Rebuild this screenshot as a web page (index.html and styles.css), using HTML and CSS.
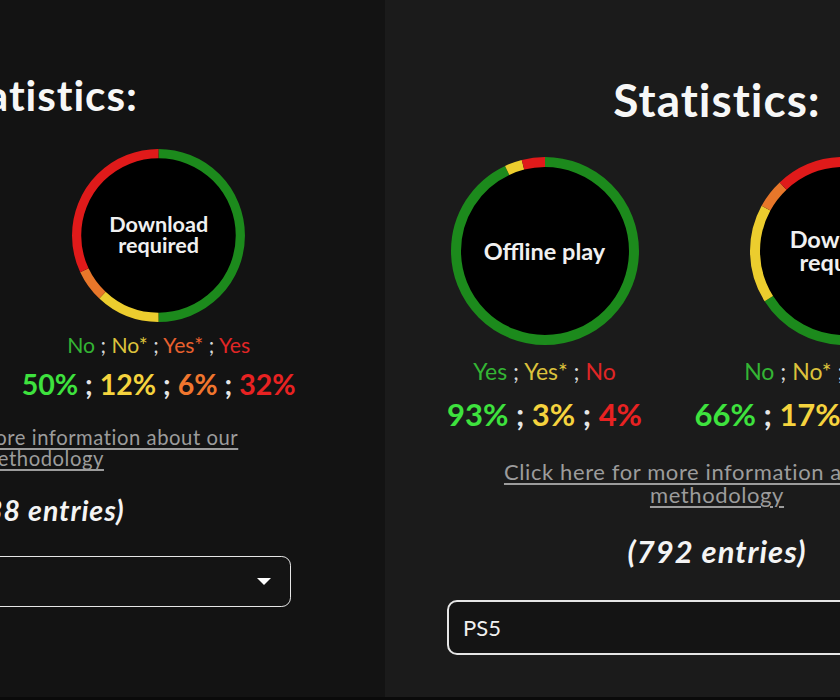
FILE: index.html
```html
<!DOCTYPE html>
<html lang="en">
<head>
    <meta charset="utf-8">
    <meta name="viewport" content="width=device-width, initial-scale=1.0">
    <title>Statistics</title>
    <link rel="stylesheet" href="styles.css">
</head>
<body>
    <div class="shots">
        <!-- Switch page -->
        <div class="shot shot-left">
            <div class="page">
                <h2 class="title">Statistics:</h2>
                <div class="charts">
                    <div class="chart">
                        <div class="donut">
                            <svg class="ring" viewBox="0 0 188 188">
                                <circle class="ring-hole" cx="94" cy="94" r="89"/>
                                <g transform="rotate(-90 94 94)">
                                    <circle class="seg seg-green" cx="94" cy="94" r="89" pathLength="100" stroke-dasharray="88 100" stroke-dashoffset="0"/>
                                    <circle class="seg seg-yellow" cx="94" cy="94" r="89" pathLength="100" stroke-dasharray="5 100" stroke-dashoffset="-88"/>
                                    <circle class="seg seg-red" cx="94" cy="94" r="89" pathLength="100" stroke-dasharray="7 100" stroke-dashoffset="-93"/>
                                </g>
                            </svg>
                            <span class="donut-label">Offline play</span>
                        </div>
                        <div class="legend"><span class="c-green">Yes</span> ; <span class="c-yellow">Yes*</span> ; <span class="c-red">No</span></div>
                        <div class="shares"><span class="p-green">88%</span> ; <span class="p-yellow">5%</span> ; <span class="p-red">7%</span></div>
                    </div>
                    <div class="chart">
                        <div class="donut">
                            <svg class="ring" viewBox="0 0 188 188">
                                <circle class="ring-hole" cx="94" cy="94" r="89"/>
                                <g transform="rotate(-90 94 94)">
                                    <circle class="seg seg-green" cx="94" cy="94" r="89" pathLength="100" stroke-dasharray="50 100" stroke-dashoffset="0"/>
                                    <circle class="seg seg-yellow" cx="94" cy="94" r="89" pathLength="100" stroke-dasharray="12 100" stroke-dashoffset="-50"/>
                                    <circle class="seg seg-orange" cx="94" cy="94" r="89" pathLength="100" stroke-dasharray="6 100" stroke-dashoffset="-62"/>
                                    <circle class="seg seg-red" cx="94" cy="94" r="89" pathLength="100" stroke-dasharray="32 100" stroke-dashoffset="-68"/>
                                </g>
                            </svg>
                            <span class="donut-label">Download<br>required</span>
                        </div>
                        <div class="legend"><span class="c-green">No</span> ; <span class="c-yellow">No*</span> ; <span class="c-orange">Yes*</span> ; <span class="c-red">Yes</span></div>
                        <div class="shares"><span class="p-green">50%</span> ; <span class="p-yellow">12%</span> ; <span class="p-orange">6%</span> ; <span class="p-red">32%</span></div>
                    </div>
                </div>
                <a class="method-link" href="#">Click here for more information about our methodology</a>
                <div class="entries">(538 entries)</div>
                <div class="select">
                    <span>Switch</span>
                    <span class="caret"></span>
                </div>
            </div>
        </div>

        <!-- PS5 page -->
        <div class="shot shot-right">
            <div class="page">
                <h2 class="title">Statistics:</h2>
                <div class="charts">
                    <div class="chart">
                        <div class="donut">
                            <svg class="ring" viewBox="0 0 188 188">
                                <circle class="ring-hole" cx="94" cy="94" r="89"/>
                                <g transform="rotate(-90 94 94)">
                                    <circle class="seg seg-green" cx="94" cy="94" r="89" pathLength="100" stroke-dasharray="93 100" stroke-dashoffset="0"/>
                                    <circle class="seg seg-yellow" cx="94" cy="94" r="89" pathLength="100" stroke-dasharray="3 100" stroke-dashoffset="-93"/>
                                    <circle class="seg seg-red" cx="94" cy="94" r="89" pathLength="100" stroke-dasharray="4 100" stroke-dashoffset="-96"/>
                                </g>
                            </svg>
                            <span class="donut-label">Offline play</span>
                        </div>
                        <div class="legend"><span class="c-green">Yes</span> ; <span class="c-yellow">Yes*</span> ; <span class="c-red">No</span></div>
                        <div class="shares"><span class="p-green">93%</span> ; <span class="p-yellow">3%</span> ; <span class="p-red">4%</span></div>
                    </div>
                    <div class="chart">
                        <div class="donut">
                            <svg class="ring" viewBox="0 0 188 188">
                                <circle class="ring-hole" cx="94" cy="94" r="89"/>
                                <g transform="rotate(-90 94 94)">
                                    <circle class="seg seg-green" cx="94" cy="94" r="89" pathLength="100" stroke-dasharray="66 100" stroke-dashoffset="0"/>
                                    <circle class="seg seg-yellow" cx="94" cy="94" r="89" pathLength="100" stroke-dasharray="17 100" stroke-dashoffset="-66"/>
                                    <circle class="seg seg-orange" cx="94" cy="94" r="89" pathLength="100" stroke-dasharray="5 100" stroke-dashoffset="-83"/>
                                    <circle class="seg seg-red" cx="94" cy="94" r="89" pathLength="100" stroke-dasharray="12 100" stroke-dashoffset="-88"/>
                                </g>
                            </svg>
                            <span class="donut-label">Download<br>required</span>
                        </div>
                        <div class="legend"><span class="c-green">No</span> ; <span class="c-yellow">No*</span> ; <span class="c-orange">Yes*</span> ; <span class="c-red">Yes</span></div>
                        <div class="shares"><span class="p-green">66%</span> ; <span class="p-yellow">17%</span> ; <span class="p-orange">5%</span> ; <span class="p-red">12%</span></div>
                    </div>
                </div>
                <a class="method-link" href="#">Click here for more information about our methodology</a>
                <div class="entries">(792 entries)</div>
                <div class="select">
                    <span>PS5</span>
                    <span class="caret"></span>
                </div>
            </div>
        </div>
    </div>
</body>
</html>
```

FILE: styles.css
```css
body {
    margin: 0;
    width: 840px;
    height: 700px;
    overflow: hidden;
    background: #0a0a0a;
    font-family: 'Lato', 'Open Sans', sans-serif;
    color: #f2f2f2;
}
.shots {
    display: flex;
    height: 697px;
}
.shot {
    overflow: hidden;
    box-sizing: border-box;
}
.shot-left {
    width: 385px;
    background: #131313;
    padding-top: 4px;
}
.shot-right {
    width: 455px;
    background: #1b1b1b;
}
.page {
    width: 900px;
    display: flex;
    flex-direction: column;
    align-items: center;
}
.shot-left .page {
    zoom: 0.92;
    margin-left: -404px;
}
.shot-right .page {
    margin-left: -118px;
}
.title {
    margin: 72px 0 0 0;
    font-size: 46px;
    line-height: 1.2;
    font-weight: 700;
    letter-spacing: 1px;
    color: #f7f7f7;
}
.charts {
    align-self: stretch;
    display: flex;
    padding-left: 128px;
    margin-top: 30px;
}
.chart {
    width: 299px;
    flex-shrink: 0;
    display: flex;
    flex-direction: column;
    align-items: center;
}
.donut {
    display: grid;
    place-items: center;
    width: 188px;
    height: 188px;
}
.donut > * {
    grid-area: 1 / 1;
}
.ring {
    width: 188px;
    height: 188px;
}
.ring-hole {
    fill: #000;
}
.seg {
    fill: none;
    stroke-width: 10;
}
.seg-green { stroke: #1c8a1c; }
.seg-yellow { stroke: #eccd2e; }
.seg-orange { stroke: #e8772a; }
.seg-red { stroke: #e01a1a; }
.donut-label {
    font-size: 23.5px;
    line-height: 23px;
    font-weight: 700;
    text-align: center;
    color: #f0f0f0;
}
.legend {
    margin-top: 12px;
    font-size: 23px;
    line-height: 28px;
    white-space: nowrap;
    color: #d8d8d8;
}
.c-green { color: #34b534; }
.c-yellow { color: #dcc23c; }
.c-orange { color: #e8602e; }
.c-red { color: #e02626; }
.shares {
    margin-top: 11px;
    font-size: 31px;
    line-height: 36px;
    font-weight: 700;
    white-space: nowrap;
    color: #e6e6e6;
}
.p-green { color: #3ee23e; }
.p-yellow { color: #f5d33e; }
.p-orange { color: #f0762e; }
.p-red { color: #e82222; }
.method-link {
    width: 440px;
    margin-top: 28px;
    font-size: 22px;
    line-height: 23px;
    letter-spacing: 0.6px;
    text-align: center;
    color: #9c9c9c;
    text-decoration: underline;
    text-underline-offset: 3px;
}
.entries {
    margin-top: 27px;
    font-size: 31px;
    line-height: 36px;
    font-weight: 700;
    font-style: italic;
    letter-spacing: 1px;
    color: #f4f4f4;
}
.select {
    width: 540px;
    height: 55px;
    margin-top: 31px;
    box-sizing: border-box;
    border: 2px solid #e6e6e6;
    border-radius: 10px;
    background: #141414;
    display: flex;
    align-items: center;
    justify-content: space-between;
    padding: 0 20px 0 14px;
    font-size: 22px;
    color: #f0f0f0;
}
.caret {
    width: 0;
    height: 0;
    border-left: 8px solid transparent;
    border-right: 8px solid transparent;
    border-top: 8px solid #fff;
}
```
